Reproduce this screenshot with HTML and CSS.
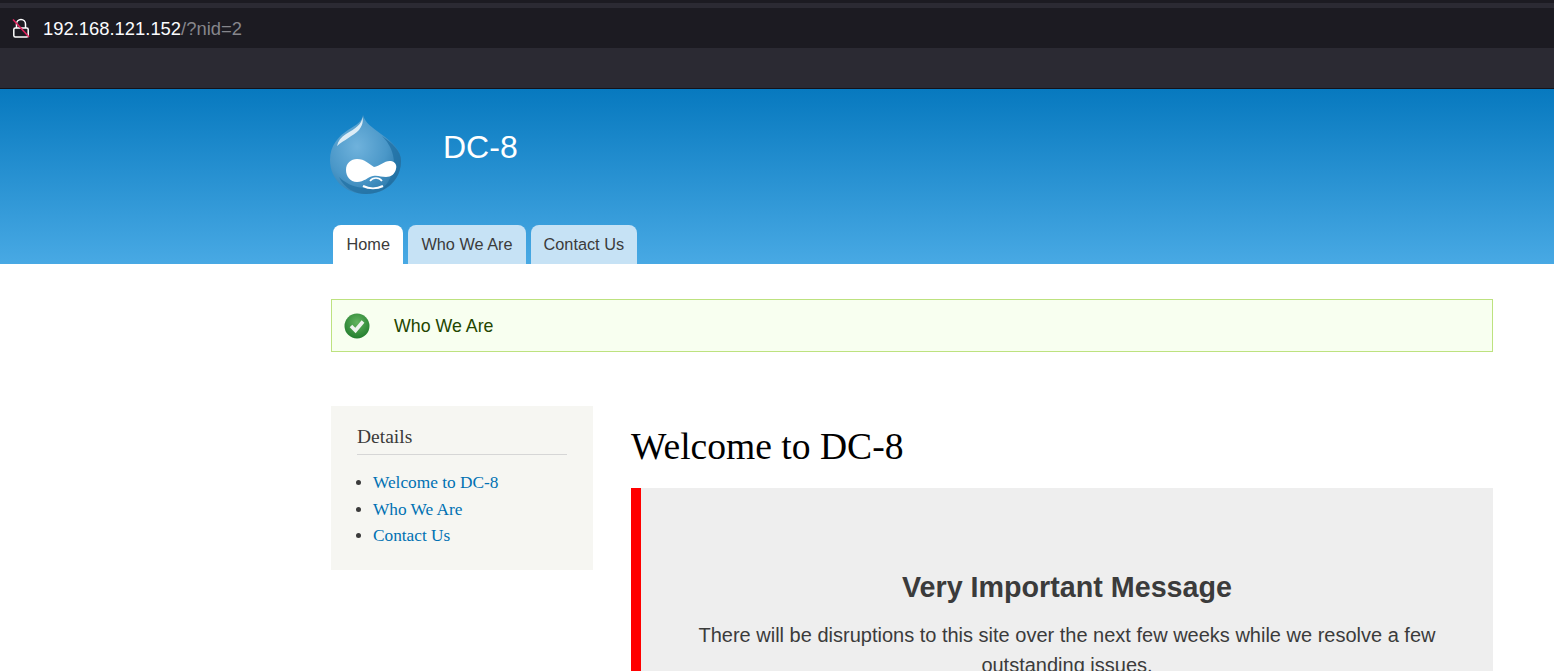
FILE: index.html

```html
<!DOCTYPE html>
<html lang="en">
<head>
<meta charset="UTF-8">
<meta name="viewport" content="width=device-width, initial-scale=1.0">
<title>Welcome to DC-8</title>
<link rel="stylesheet" href="styles.css">
</head>
<body>
  <div class="browser-bar">
    <div class="address-row">
      <svg class="lock-icon" width="18" height="20" viewBox="0 0 18 20">
        <path d="M4.5 10V6a4.5 4.5 0 0 1 9 0v4" fill="none" stroke="#fff" stroke-width="1.5"/>
        <rect x="1.8" y="10" width="14.4" height="9" rx="1.5" fill="none" stroke="#fff" stroke-width="1.5"/>
        <path d="M1 1.5l16 17.5" stroke="#e0245e" stroke-width="1.6"/>
      </svg>
      <span class="host">192.168.121.152</span><span class="url-rest">/?nid=2</span>
    </div>
    <div class="tool-row"></div>
  </div>

  <header class="site-header">
    <div class="branding">
      <svg class="logo" width="72" height="80" viewBox="0 0 72 80">
        <defs>
          <radialGradient id="dropFill" cx="0.38" cy="0.4" r="0.7">
            <stop offset="0" stop-color="#6fb2dc"/>
            <stop offset="0.6" stop-color="#4a97c8"/>
            <stop offset="1" stop-color="#2a78aa"/>
          </radialGradient>
        </defs>
        <path d="M33 0C35 8 42 12 51 19C62 27 71 35 71 46C71 65 56 79 36 79C15 79 0 64 0 45C0 30 9 21 18 15C26 10 32 7 33 0Z" fill="url(#dropFill)"/>
        <path d="M52 21C62 28 71 36 71 46C71 58 64 70 52 75C62 64 66 52 63 40C61 32 57 26 52 21Z" fill="#1f6fa3" opacity="0.75"/>
        <path d="M9 62C14 73 25 79 36 79C46 79 56 75 63 66C55 72 45 75 34 73C23 72 15 68 9 62Z" fill="#1f6fa3" opacity="0.7"/>
        <path d="M32.5 2C32 9 25 14 16 19C11 22 8 26 7 31C14 25 23 21 29 15C32 11 33.5 7 32.5 2Z" fill="#eaf4fa" opacity="0.9"/>
        <path d="M16 55C16 48 21 44 27 44C35 44 39 49 44 52C50 51 55 45 61 46C66 47 67 51 66 54C65 59 61 62 56 62C51 62 48 60 43 61C38 62 34 67 27 67C20 67 16 61 16 55Z" fill="#fff"/>
        <path d="M40 66C43 62 49 62 52 66" fill="none" stroke="#fff" stroke-width="1.6"/>
        <path d="M33 71C39 74 47 74 53 71" fill="none" stroke="#fff" stroke-width="2.2"/>
      </svg>
      <div class="site-name">DC-8</div>
    </div>
    <nav class="tabs">
      <a href="#" class="tab active">Home</a>
      <a href="#" class="tab">Who We Are</a>
      <a href="#" class="tab">Contact Us</a>
    </nav>
  </header>

  <div class="page">
    <div class="status-msg">
      <svg class="check-icon" width="26" height="26" viewBox="0 0 26 26">
        <defs>
          <radialGradient id="checkFill" cx="0.5" cy="0.35" r="0.7">
            <stop offset="0" stop-color="#62b35f"/>
            <stop offset="1" stop-color="#1f7a2b"/>
          </radialGradient>
        </defs>
        <circle cx="13" cy="13" r="12.5" fill="url(#checkFill)"/>
        <path d="M7 13l4.5 4.5L19 8.5" fill="none" stroke="#eef3ee" stroke-width="3.6"/>
      </svg>
      <span>Who We Are</span>
    </div>

    <div class="columns">
      <aside class="sidebar">
        <h2>Details</h2>
        <ul>
          <li><a href="#">Welcome to DC-8</a></li>
          <li><a href="#">Who We Are</a></li>
          <li><a href="#">Contact Us</a></li>
        </ul>
      </aside>
      <main class="content">
        <h1>Welcome to DC-8</h1>
        <div class="callout">
          <h3>Very Important Message</h3>
          <p>There will be disruptions to this site over the next few weeks while we resolve a few outstanding issues.</p>
        </div>
      </main>
    </div>
  </div>
</body>
</html>
```

FILE: styles.css

```css
html, body {
  height: 671px;
  overflow: hidden;
}

body {
  margin: 0;
  font-family: "Liberation Sans", Arial, sans-serif;
  background-color: #fff;
  color: #3b3b3b;
}

.browser-bar {
  height: 89px;
  box-sizing: border-box;
  padding-top: 5px;
  border-top: 3px solid #1c1b22;
  border-bottom: 1px solid #14131a;
  background-color: #2b2a33;
}

.address-row {
  height: 40px;
  display: flex;
  align-items: center;
  padding-left: 12px;
  background-color: #1c1b22;
  font-size: 18.4px;
  line-height: 24px;
}

.address-row span {
  padding-top: 2px;
}

.lock-icon {
  margin-right: 13px;
}

.host {
  color: #fbfbfe;
}

.url-rest {
  color: #86868c;
}

.site-header {
  height: 175px;
  padding-left: 330px;
  box-sizing: border-box;
  background: linear-gradient(to bottom, #0779bf, #48a9e4);
  display: flex;
  flex-direction: column;
}

.branding {
  display: flex;
  height: 136px;
  padding-top: 26px;
  box-sizing: border-box;
}

.logo {
  margin-right: 41px;
}

.site-name {
  color: #fff;
  font-size: 32px;
  line-height: 37px;
  margin-top: 14px;
}

.tabs {
  display: flex;
  gap: 5px;
  padding-left: 3px;
}

.tab {
  height: 39px;
  line-height: 39px;
  padding: 0 13px;
  font-size: 16.3px;
  color: #3b3b3b;
  text-decoration: none;
  background-color: #c6e2f5;
  border-radius: 8px 8px 0 0;
}

.tab.active {
  padding: 0 13.5px;
  background-color: #fff;
}

.page {
  margin: 35px 61px 0 331px;
}

.status-msg {
  height: 53px;
  box-sizing: border-box;
  display: flex;
  align-items: center;
  padding-left: 12px;
  gap: 24px;
  border: 1px solid #bde27f;
  background-color: #f8fff0;
  color: #234600;
  font-size: 17.8px;
  line-height: 24px;
}

.columns {
  display: flex;
  margin-top: 54px;
  align-items: flex-start;
}

.sidebar {
  width: 262px;
  flex-shrink: 0;
  height: 164px;
  box-sizing: border-box;
  padding: 19px 26px 0;
  margin-right: 38px;
  background-color: #f6f6f2;
  font-family: "Liberation Serif", Georgia, serif;
}

.sidebar h2 {
  margin: 0;
  font-size: 19.5px;
  font-weight: normal;
  line-height: 24px;
  height: 29px;
  color: #3b3b3b;
  border-bottom: 1px solid #d6d6d6;
}

.sidebar ul {
  margin: 15px 0 0;
  padding-left: 16px;
  font-size: 17.3px;
  line-height: 26.5px;
}

.sidebar a {
  color: #0071b3;
  text-decoration: none;
}

.content {
  flex: 1;
}

.content h1 {
  margin: 21px 0 0;
  font-family: "Liberation Serif", Georgia, serif;
  font-size: 37.6px;
  font-weight: normal;
  line-height: 40px;
  color: #000;
}

.callout {
  margin-top: 21px;
  border-left: 10px solid #f00;
  background-color: #eee;
  padding: 82px 40px 20px;
  text-align: center;
  color: #3b3b3b;
}

.callout h3 {
  margin: 0;
  font-size: 28.7px;
  line-height: 34px;
}

.callout p {
  margin: 17px 0 0;
  font-size: 20px;
  line-height: 29.5px;
}
```
